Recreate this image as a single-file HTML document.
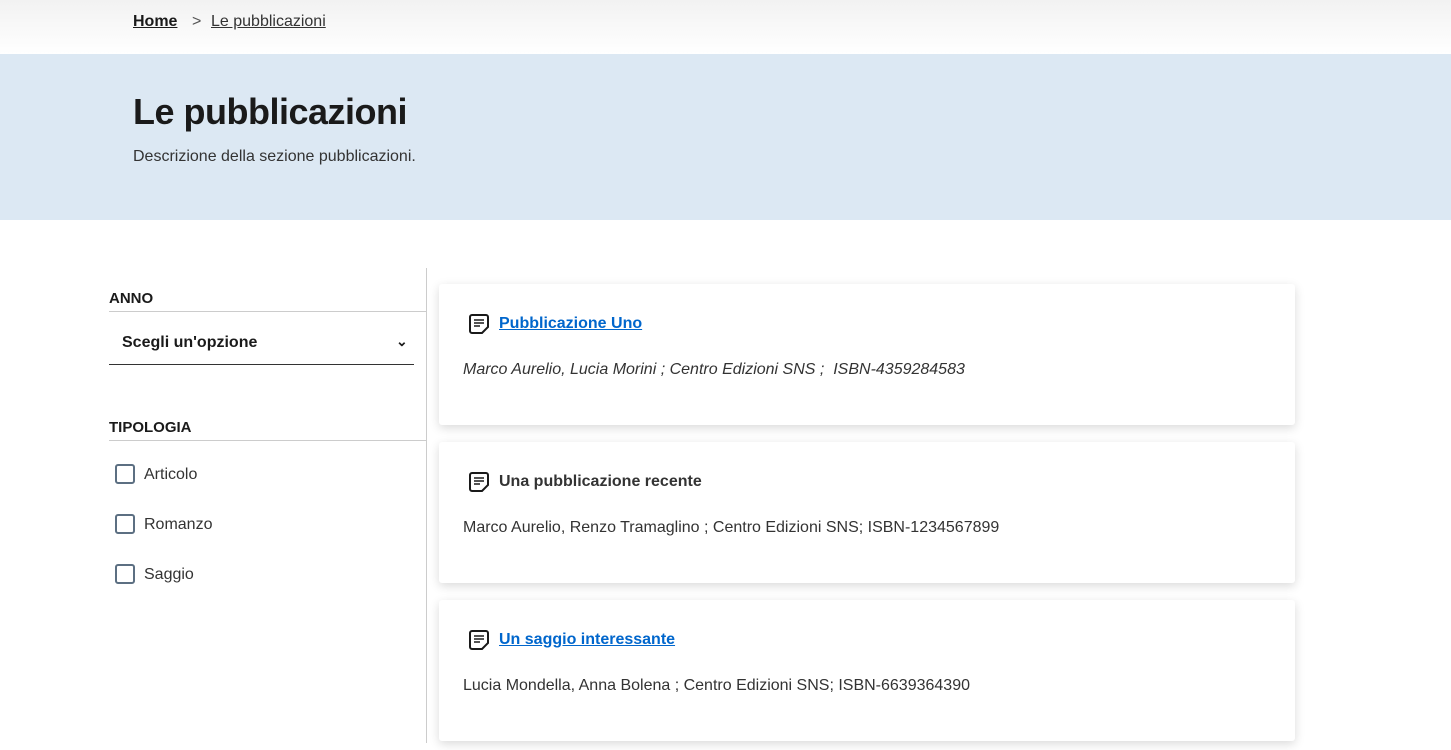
<!DOCTYPE html>
<html><head><meta charset="utf-8"><style>
body{margin:0;width:1451px;height:750px;overflow:hidden;font-family:"Liberation Sans",sans-serif;color:#1a1a1a;background:#fff;position:relative}
.bc{position:absolute;top:0;left:0;width:1451px;height:54px;background:linear-gradient(#f2f2f2,#fff)}
.bc span{position:absolute;top:13px;font-size:16px;color:#1a1a1a}
.hero{position:absolute;top:54px;left:0;width:1451px;height:166px;background:#dce8f3}
h1{position:absolute;left:133px;top:91px;margin:0;font-size:36px;font-weight:bold;letter-spacing:-0.5px}
.desc{position:absolute;left:133px;top:148px;font-size:16px;color:#333}
.lbl{position:absolute;left:109px;font-size:15px;font-weight:bold}
.line{position:absolute;left:109px;width:317px;height:1px;background:#ccc}
.vline{position:absolute;left:426px;top:268px;width:1px;height:475px;background:#ccc}
.cb{position:absolute;left:115px;width:16px;height:16px;border:2px solid #5c6f82;border-radius:3px}
.cbl{position:absolute;left:144px;font-size:16px;color:#333}
.card{position:absolute;left:439px;width:856px;height:141px;background:#fff;box-shadow:0 3px 10px rgba(0,0,0,.15);border-radius:3px}
.card .t{position:absolute;left:60px;top:31px;font-size:16px;font-weight:bold}
.card .t.a{color:#0066cc;text-decoration:underline}
.card .m{position:absolute;left:24px;top:77px;font-size:16px;color:#333}
.card svg{position:absolute;left:28px;top:28px}
</style></head><body>
<div class="bc"><span style="left:133px;font-weight:bold;text-decoration:underline">Home</span><span style="left:192px;color:#555">&gt;</span><span style="left:211px;text-decoration:underline;color:#333">Le pubblicazioni</span></div>
<div class="hero"></div>
<h1>Le pubblicazioni</h1>
<div class="desc">Descrizione della sezione pubblicazioni.</div>
<div class="vline"></div>
<div class="lbl" style="top:290px">ANNO</div>
<div class="line" style="top:311px"></div>
<div style="position:absolute;left:122px;top:334px;font-size:16px;font-weight:bold">Scegli un'opzione</div>
<div style="position:absolute;left:396px;top:333px;font-size:14px;font-weight:bold">&#8964;</div>
<div style="position:absolute;left:109px;top:364px;width:305px;height:1px;background:#333"></div>
<div class="lbl" style="top:419px">TIPOLOGIA</div>
<div class="line" style="top:440px"></div>
<div class="cb" style="top:464px"></div><div class="cbl" style="top:466px">Articolo</div>
<div class="cb" style="top:514px"></div><div class="cbl" style="top:516px">Romanzo</div>
<div class="cb" style="top:564px"></div><div class="cbl" style="top:566px">Saggio</div>
<div class="card" style="top:284px">
<svg width="24" height="24" viewBox="0 0 24 24"><path d="M5 3h14a2 2 0 0 1 2 2v10l-6 6H5a2 2 0 0 1-2-2V5a2 2 0 0 1 2-2z" fill="none" stroke="#1a1a1a" stroke-width="2"/><path d="M7 8h10M7 11h10M7 14h6" stroke="#1a1a1a" stroke-width="1.6"/></svg>
<div class="t a">Pubblicazione Uno</div><div class="m" style="font-style:italic">Marco Aurelio, Lucia Morini ; Centro Edizioni SNS ;&nbsp; ISBN-4359284583</div></div>
<div class="card" style="top:442px">
<svg width="24" height="24" viewBox="0 0 24 24"><path d="M5 3h14a2 2 0 0 1 2 2v10l-6 6H5a2 2 0 0 1-2-2V5a2 2 0 0 1 2-2z" fill="none" stroke="#1a1a1a" stroke-width="2"/><path d="M7 8h10M7 11h10M7 14h6" stroke="#1a1a1a" stroke-width="1.6"/></svg>
<div class="t" style="color:#333">Una pubblicazione recente</div><div class="m">Marco Aurelio, Renzo Tramaglino ; Centro Edizioni SNS; ISBN-1234567899</div></div>
<div class="card" style="top:600px">
<svg width="24" height="24" viewBox="0 0 24 24"><path d="M5 3h14a2 2 0 0 1 2 2v10l-6 6H5a2 2 0 0 1-2-2V5a2 2 0 0 1 2-2z" fill="none" stroke="#1a1a1a" stroke-width="2"/><path d="M7 8h10M7 11h10M7 14h6" stroke="#1a1a1a" stroke-width="1.6"/></svg>
<div class="t a">Un saggio interessante</div><div class="m">Lucia Mondella, Anna Bolena ; Centro Edizioni SNS; ISBN-6639364390</div></div>
</body></html>
